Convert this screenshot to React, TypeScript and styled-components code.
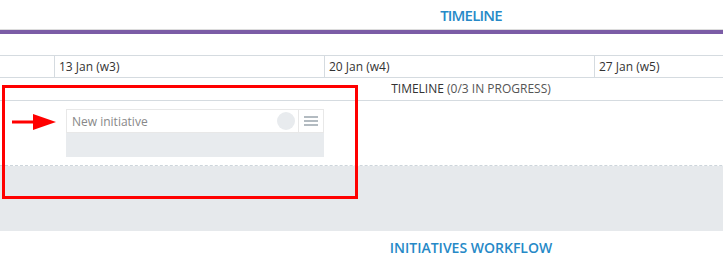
import styled, { createGlobalStyle } from 'styled-components';

const GlobalStyle = createGlobalStyle`
  body {
    margin: 0;
    overflow: hidden;
    background: #fff;
    font-family: "Open Sans", "Liberation Sans", sans-serif;
  }
`;

const Viewport = styled.div`
  position: relative;
  width: 100%;
  height: 261px;
  overflow: hidden;
`;

const Board = styled.div`
  width: 942px;
`;

const BoardTitle = styled.div`
  height: 29px;
  display: flex;
  align-items: center;
  justify-content: center;
  color: #2689c7;
  font-size: 15px;
  font-weight: 600;
  letter-spacing: -0.8px;
`;

const Divider = styled.div`
  border-top: 1px solid #dcdcdc;
  height: 4px;
  background: #7b5ca6;
  margin-bottom: 21px;
`;

const DateRow = styled.div`
  display: grid;
  grid-template-columns: 54px repeat(4, 270px);
  height: 21px;
  border-top: 1px solid #d5dbe0;
  border-bottom: 1px solid #d5dbe0;
`;

const DateCell = styled.div<{ $first?: boolean }>`
  border-left: ${({ $first }) => ($first ? 'none' : '1px solid #d5dbe0')};
  padding-left: 4px;
  font-size: 12px;
  line-height: 21px;
  color: #333;
`;

const LaneHeader = styled.div`
  height: 22px;
  line-height: 22px;
  text-align: center;
  font-size: 12px;
  color: #333;
  border-bottom: 1px solid #d5dbe0;
`;

const Muted = styled.span`
  color: #555;
`;

const LaneBody = styled.div`
  height: 56px;
  padding: 8px 0 0 66px;
  border-bottom: 1px dashed #cdd5db;
`;

const Card = styled.div`
  width: 258px;
  display: flex;
  flex-direction: column;
`;

const CardHead = styled.div`
  height: 22px;
  display: flex;
  align-items: center;
  background: #fff;
  border: 1px solid #e8e8e8;
`;

const CardName = styled.div`
  flex: 1;
  padding-left: 5px;
  font-size: 12px;
  color: #888;
`;

const Avatar = styled.div`
  width: 18px;
  height: 18px;
  border-radius: 50%;
  background: #e8ebee;
  margin-right: 3px;
`;

const MenuButton = styled.div`
  width: 24px;
  height: 22px;
  border-left: 1px solid #e8e8e8;
  display: flex;
  flex-direction: column;
  align-items: center;
  justify-content: center;
  gap: 2px;
`;

const MenuLine = styled.span`
  display: block;
  width: 14px;
  height: 2px;
  background: #b3bbc1;
`;

const CardFoot = styled.div`
  height: 24px;
  background: #e8ebee;
`;

const DropZone = styled.div`
  height: 65px;
  background: #e6e9ec;
`;

const SectionTitle = styled.div`
  padding-top: 7px;
  text-align: center;
  color: #2689c7;
  font-size: 14px;
  font-weight: 600;
`;

const Highlight = styled.div`
  position: absolute;
  left: 2px;
  top: 85px;
  width: 350px;
  height: 108px;
  border: 3px solid #ff0000;
`;

const Arrow = styled.svg`
  position: absolute;
  left: 12px;
  top: 113px;
`;

const dates = ['', '13 Jan (w3)', '20 Jan (w4)', '27 Jan (w5)', ''];

export default function App() {
  return (
    <Viewport>
      <GlobalStyle />
      <Board>
        <BoardTitle>TIMELINE</BoardTitle>
        <Divider />
        <DateRow>
          {dates.map((d, i) => (
            <DateCell key={i} $first={i === 0}>
              {d}
            </DateCell>
          ))}
        </DateRow>
        <LaneHeader>
          TIMELINE <Muted>(0/3 IN PROGRESS)</Muted>
        </LaneHeader>
        <LaneBody>
          <Card>
            <CardHead>
              <CardName>New initiative</CardName>
              <Avatar />
              <MenuButton>
                <MenuLine />
                <MenuLine />
                <MenuLine />
              </MenuButton>
            </CardHead>
            <CardFoot />
          </Card>
        </LaneBody>
        <DropZone />
        <SectionTitle>INITIATIVES WORKFLOW</SectionTitle>
      </Board>
      <Highlight />
      <Arrow width="46" height="18" viewBox="0 0 46 18">
        <rect x="0" y="7.5" width="23" height="3" fill="#ff0000" />
        <polygon points="21,1 44,9 21,17" fill="#ff0000" />
      </Arrow>
    </Viewport>
  );
}
